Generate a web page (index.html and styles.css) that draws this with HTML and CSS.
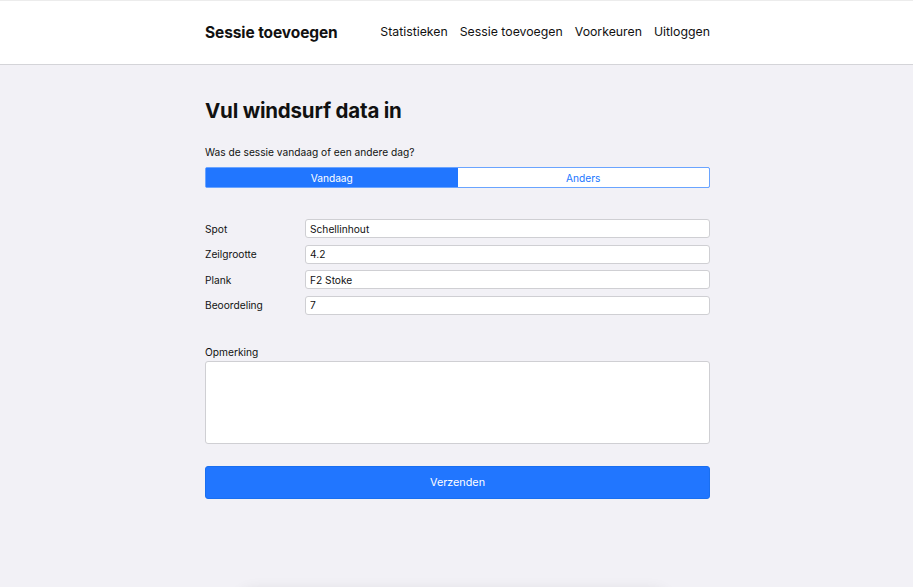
FILE: index.html
```html
<!DOCTYPE html>
<html lang="nl">
<head>
<meta charset="utf-8">
<title>Sessie toevoegen</title>
<link rel="stylesheet" href="styles.css">
</head>
<body>
<header class="topbar">
  <div class="container bar-inner">
    <div class="brand">Sessie toevoegen</div>
    <nav class="nav">
      <a href="#">Statistieken</a>
      <a href="#">Sessie toevoegen</a>
      <a href="#">Voorkeuren</a>
      <a href="#">Uitloggen</a>
    </nav>
  </div>
</header>
<main class="container main">
  <h1 class="title">Vul windsurf data in</h1>
  <p class="question">Was de sessie vandaag of een andere dag?</p>
  <div class="segment">
    <button class="seg seg-active">Vandaag</button>
    <button class="seg">Anders</button>
  </div>
  <div class="fields">
    <div class="row"><label>Spot</label><input class="field" value="Schellinhout"></div>
    <div class="row"><label>Zeilgrootte</label><input class="field" value="4.2"></div>
    <div class="row"><label>Plank</label><input class="field" value="F2 Stoke"></div>
    <div class="row"><label>Beoordeling</label><input class="field" value="7"></div>
  </div>
  <div class="remark">
    <label>Opmerking</label>
    <textarea class="area"></textarea>
  </div>
  <button class="submit">Verzenden</button>
  <div class="ghost"></div>
</main>
</body>
</html>
```
FILE: styles.css
```css
html, body {
  margin: 0;
  padding: 0;
  background: #f2f1f6;
  font-family: Inter, "Liberation Sans", sans-serif;
  color: #111;
  height: 100%;
  overflow: hidden;
}
.container {
  width: 505px;
  margin-left: calc(50% - 251.5px);
}
.topbar {
  background: #fff;
  border-top: 1px solid #ececec;
  border-bottom: 1px solid #d4d4d8;
  height: 63px;
}
.bar-inner {
  display: flex;
  align-items: center;
  justify-content: space-between;
  height: 100%;
}
.brand {
  font-weight: 700;
  font-size: 15.5px;
  letter-spacing: -0.1px;
}
.nav {
  display: flex;
  gap: 12px;
  padding-bottom: 2px;
}
.nav a {
  color: #111;
  text-decoration: none;
  font-size: 12.3px;
}
.main {
  padding-top: 33px;
  position: relative;
}
.title {
  margin: 0;
  font-size: 20.5px;
  font-weight: 700;
  letter-spacing: -0.2px;
  line-height: 26px;
}
.question {
  margin: 21px 0 0;
  font-size: 10.2px;
  line-height: 14px;
}
.segment {
  display: flex;
  margin-top: 8px;
  height: 21px;
  border: 1px solid #6aa4ff;
  border-radius: 2px;
  box-sizing: border-box;
  overflow: hidden;
  background: #2176ff;
}
.seg {
  flex: 1;
  border: 0;
  margin: 0;
  padding: 0;
  background: #fff;
  color: #2176ff;
  font-family: inherit;
  font-size: 10.2px;
}
.seg-active {
  background: #2176ff;
  color: #fff;
}
.fields {
  margin-top: 31px;
  display: flex;
  flex-direction: column;
  gap: 6.5px;
}
.row {
  display: flex;
  align-items: center;
}
.row label {
  width: 100px;
  font-size: 10.2px;
}
.field {
  flex: 1;
  height: 19px;
  box-sizing: border-box;
  border: 1px solid #cfcfd3;
  border-radius: 3px;
  background: #fff;
  padding: 0 4px;
  font-family: inherit;
  font-size: 10.2px;
  color: #111;
  margin: 0;
}
.remark {
  margin-top: 30px;
  display: flex;
  flex-direction: column;
}
.remark label {
  font-size: 10.2px;
  line-height: 14px;
  margin-bottom: 2px;
}
.area {
  height: 83px;
  box-sizing: border-box;
  border: 1px solid #cfcfd3;
  border-radius: 3px;
  background: #fff;
  resize: none;
  margin: 0;
}
.submit {
  margin-top: 22px;
  width: 100%;
  height: 33px;
  border: 1px solid #1a6ff0;
  border-radius: 3px;
  background: #2176ff;
  color: #fff;
  font-family: inherit;
  font-size: 10.8px;
}
.ghost {
  position: absolute;
  left: 36px;
  right: 44px;
  top: 530px;
  height: 40px;
  border-radius: 12px;
  background: #f0eff4;
  box-shadow: 0 -3px 16px rgba(0,0,0,0.12);
}
```
